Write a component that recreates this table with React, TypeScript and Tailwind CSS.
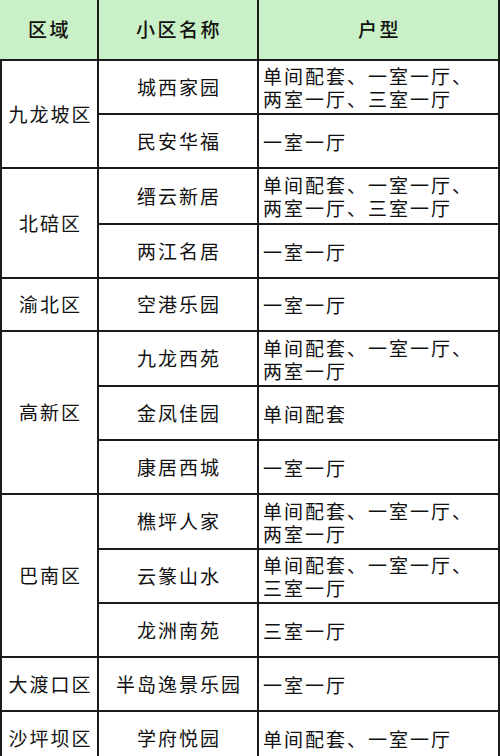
import { Fragment } from 'react'

const ROWS: { district: string; span: number; estates: { name: string; types: string[] }[] }[] = [
  {
    district: '九龙坡区',
    span: 2,
    estates: [
      { name: '城西家园', types: ['单间配套、一室一厅、', '两室一厅、三室一厅'] },
      { name: '民安华福', types: ['一室一厅'] },
    ],
  },
  {
    district: '北碚区',
    span: 2,
    estates: [
      { name: '缙云新居', types: ['单间配套、一室一厅、', '两室一厅、三室一厅'] },
      { name: '两江名居', types: ['一室一厅'] },
    ],
  },
  { district: '渝北区', span: 1, estates: [{ name: '空港乐园', types: ['一室一厅'] }] },
  {
    district: '高新区',
    span: 3,
    estates: [
      { name: '九龙西苑', types: ['单间配套、一室一厅、', '两室一厅'] },
      { name: '金凤佳园', types: ['单间配套'] },
      { name: '康居西城', types: ['一室一厅'] },
    ],
  },
  {
    district: '巴南区',
    span: 3,
    estates: [
      { name: '樵坪人家', types: ['单间配套、一室一厅、', '两室一厅'] },
      { name: '云篆山水', types: ['单间配套、一室一厅、', '三室一厅'] },
      { name: '龙洲南苑', types: ['三室一厅'] },
    ],
  },
  { district: '大渡口区', span: 1, estates: [{ name: '半岛逸景乐园', types: ['一室一厅'] }] },
  { district: '沙坪坝区', span: 1, estates: [{ name: '学府悦园', types: ['单间配套、一室一厅'] }] },
]

const ROW_SPAN: Record<number, string> = {
  1: 'row-span-1',
  2: 'row-span-2',
  3: 'row-span-3',
}

export default function App() {
  const cell = 'border-r-2 border-b-2 border-[#1b1b1b] flex items-center'
  const head = `${cell} justify-center bg-[#c9f0c6] text-[19px] font-medium tracking-[2.5px] pl-[2px]`
  return (
    <div
      className="w-[500px] h-[756px] overflow-hidden bg-white text-[#111]"
      style={{ fontFamily: '"Noto Sans CJK SC", "Noto Sans", sans-serif' }}
    >
      <div className="grid grid-cols-[99px_160px_241px] grid-rows-[61px_54px_54px_56px_54px_53px_55px_54px_54px_55px_54px_54px_54px_54px]">
        <div className={head}>区域</div>
        <div className={head}>小区名称</div>
        <div className={head}>户型</div>

        {ROWS.map(group => (
          <Fragment key={group.district}>
            <div className={`${cell} ${ROW_SPAN[group.span]} border-l-2 justify-center text-[19px] tracking-[2px] pl-[2px]`}>
              {group.district}
            </div>
            {group.estates.map(e => (
              <Fragment key={e.name}>
                <div className={`${cell} col-start-2 justify-center text-[19px] tracking-[2px] pl-[2px]`}>
                  {e.name}
                </div>
                <div className={`${cell} pl-[4px] text-[19px] tracking-[2px] leading-[23px]`}>
                  {/* one text node so the wrapped lines sit tight like the source */}
                  <div className="whitespace-pre-line">{e.types.join('\n')}</div>
                </div>
              </Fragment>
            ))}
          </Fragment>
        ))}
      </div>
    </div>
  )
}
